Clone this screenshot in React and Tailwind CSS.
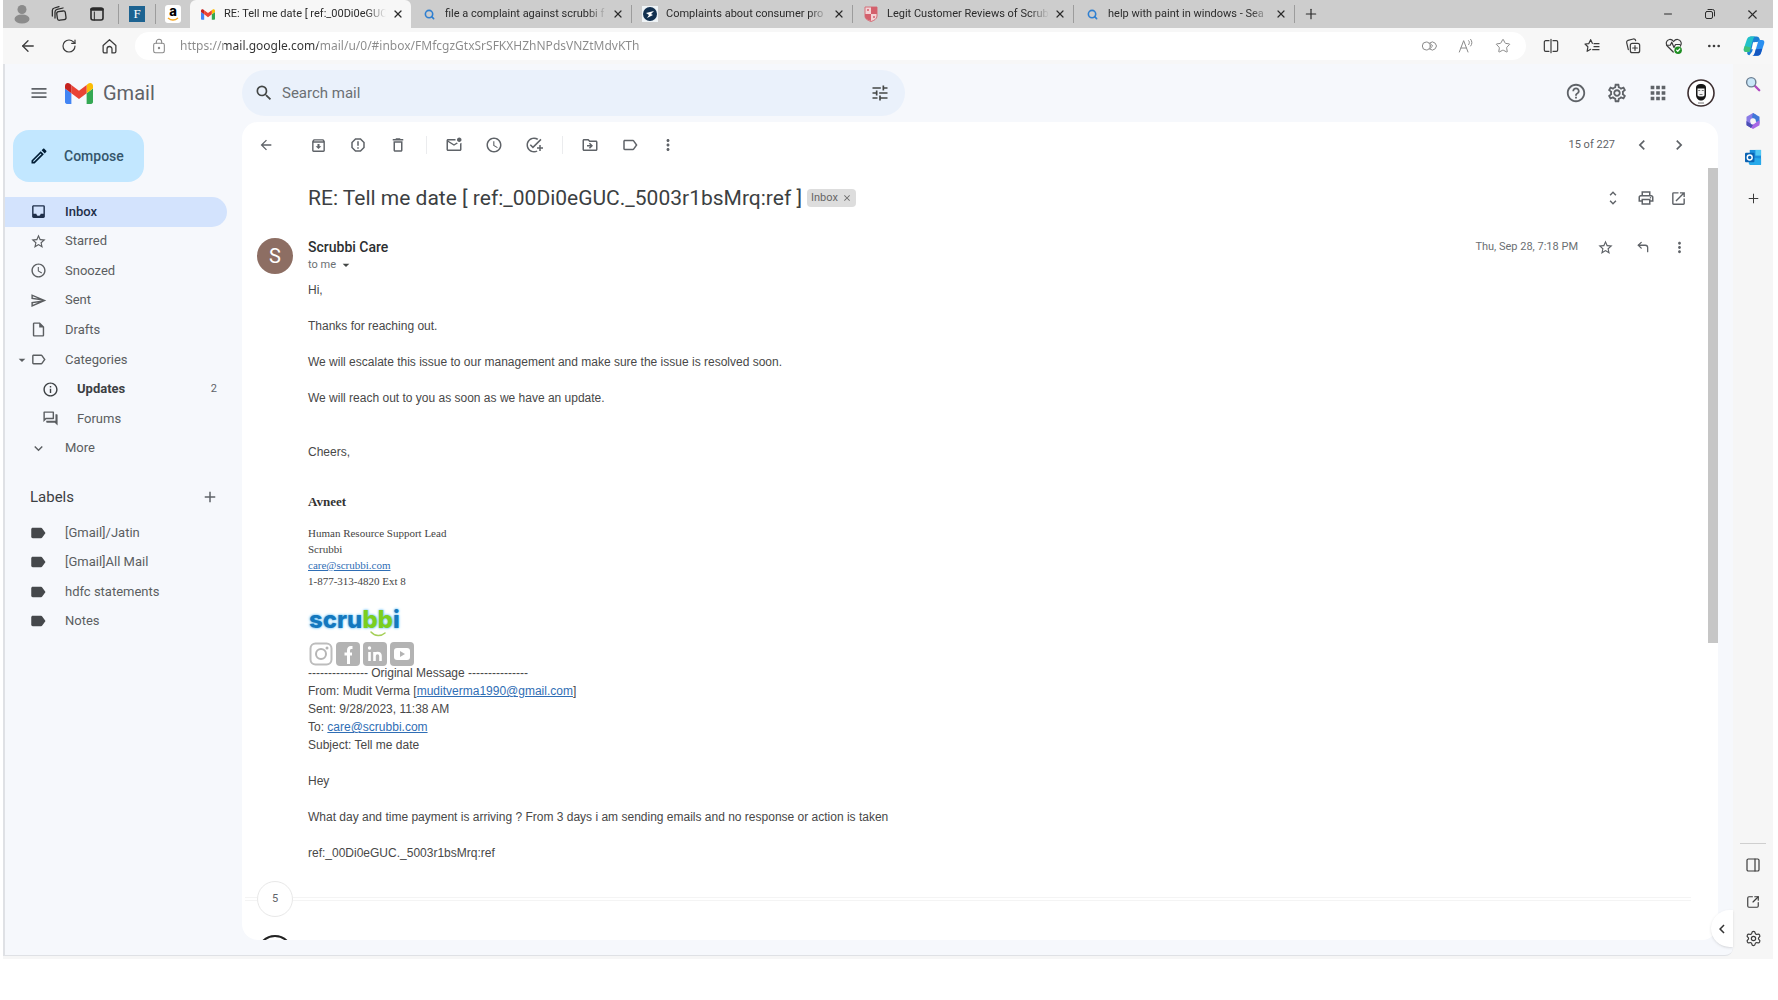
import React from "react";
import {
  MdOutlineArchive, MdReportGmailerrorred, MdOutlineDelete, MdOutlineMarkEmailUnread, MdAccessTime,
  MdOutlineAddTask, MdOutlineDriveFileMove, MdOutlineLabel, MdMoreVert, MdInbox, MdStarBorder,
  MdOutlineSend, MdOutlineInsertDriveFile, MdArrowDropDown, MdInfoOutline, MdOutlineForum,
  MdExpandMore, MdLabel, MdAdd, MdMenu, MdSearch, MdTune, MdHelpOutline, MdOutlineSettings, MdApps,
  MdUnfoldMore, MdOutlinePrint, MdOpenInNew, MdArrowBack, MdChevronLeft, MdChevronRight,
  MdOutlineCreate, MdClose,
} from "react-icons/md";
import {
  ArrowLeft, RotateCw, Star, Ellipsis, Plus, X, Minus, Search, Settings,
  PanelRight, SquareArrowOutUpRight, CornerUpLeft,
} from "lucide-react";

/* ---------- drawings ---------- */

function GmailLogo({ className }) {
  return (
    <svg viewBox="52 42 88 66" className={className} aria-hidden="true">
      <path fill="#4285f4" d="M58 108h14V74L52 59v43c0 3.320 2.690 6 6 6" />
      <path fill="#34a853" d="M120 108h14c3.320 0 6-2.690 6-6V59l-20 15" />
      <path fill="#fbbc04" d="M120 48v26l20-15v-8c0-7.420-8.470-11.650-14.400-7.200" />
      <path fill="#ea4335" d="M72 74V48l24 18 24-18v26L96 92" />
      <path fill="#c5221f" d="M52 51v8l20 15V48l-5.600-4.200c-5.940-4.450-14.400-.22-14.400 7.200" />
    </svg>
  );
}

function Stroke({ className, children, width = 1.5 }) {
  return (
    <svg viewBox="0 0 24 24" className={className} fill="none" stroke="currentColor" strokeWidth={width} strokeLinecap="round" strokeLinejoin="round" aria-hidden="true">
      {children}
    </svg>
  );
}

const Person = () => (
  <svg viewBox="0 0 18 20" className="h-5 w-[18px]" fill="#8b8b8b" aria-hidden="true">
    <circle cx="9" cy="5.500" r="4.500" />
    <ellipse cx="9" cy="15" rx="7.500" ry="4.500" />
  </svg>
);
const Workspaces = () => (
  <Stroke className="size-4" width={1.9}>
    <rect x="9" y="8" width="13" height="13" rx="3" transform="rotate(-8 15 14)" />
    <path d="M6 18V9a4 4 0 0 1 3-4l9-2" />
    <path d="M2 15V7a4 4 0 0 1 3-4l7-2" />
  </Stroke>
);
const TabActions = () => (
  <Stroke className="size-4" width={2.4}>
    <rect x="3" y="3" width="18" height="18" rx="3" />
    <path d="M4 5h16" strokeWidth="4" />
    <path d="M8 9v12" strokeWidth="1.500" />
  </Stroke>
);
const HomeIcon = () => (
  <Stroke className="size-[17px]" width={1.8}>
    <path d="M3 10.500 12 2.500l9 8V19a2 2 0 0 1-2 2h-3.500v-5.500a3.500 3.500 0 0 0-7 0V21H5a2 2 0 0 1-2-2z" />
  </Stroke>
);
const LockIcon = () => (
  <Stroke className="size-4 shrink-0" width={1.6}>
    <rect x="4" y="8" width="16" height="14" rx="2.500" />
    <path d="M8 8V6a4 4 0 0 1 8 0v2" />
    <circle cx="12" cy="15" r="1" fill="currentColor" />
  </Stroke>
);
const CompareIcon = () => (
  <Stroke className="size-4">
    <circle cx="8" cy="12" r="6" />
    <path d="M13 7.500a6 6 0 1 1 0 9M13 7.500l4.500 4.500-4.500 4.500" />
  </Stroke>
);
const ReadAloud = () => (
  <Stroke className="size-4">
    <path d="M2 21 8.500 4 15 21M4.500 15h8M16 4c1.500 1.500 1.500 4 0 6M19 2c2.500 3 2.500 7 0 10" />
  </Stroke>
);
const SplitScreen = () => (
  <Stroke className="size-4" width={1.8}>
    <path d="M9 4H4a2 2 0 0 0-2 2v12a2 2 0 0 0 2 2h5M15 4h5a2 2 0 0 1 2 2v12a2 2 0 0 1-2 2h-5M12 2v20" />
  </Stroke>
);
const Favorites = () => (
  <Stroke className="size-4" width={1.8}>
    <path d="M12.500 8 10 2.500 7.300 8.300 1.500 9l4.300 4.200L4.700 20l5.300-3M15 8.500h7.500M15 13h7.500M13 17.500h9.500" />
  </Stroke>
);
const Collections = () => (
  <Stroke className="size-4" width={1.8}>
    <rect x="8" y="8" width="14" height="14" rx="3" />
    <path d="M5 17.500 2.500 7A3 3 0 0 1 4.500 3.500l8-2A3 3 0 0 1 16 4M15 11.500v7M11.500 15h7" />
  </Stroke>
);
const Health = () => (
  <svg viewBox="0 0 24 24" className="size-[18px]" fill="none" stroke="currentColor" strokeWidth="1.600" strokeLinejoin="round" strokeLinecap="round" aria-hidden="true">
    <path d="M11 20 3 12c-2.500-3-1.500-8 3-8.700 2.500-.3 4 .7 5.500 2.700C13 4 15 3 17 3.300c4.500.7 6 5.700 3.500 8.700" />
    <path d="M2 11h5l2-4 3 7 2-4h6" />
    <circle cx="17.500" cy="17.500" r="5" fill="#1e8e22" stroke="none" />
    <path d="m15.500 17.500 1.500 1.500 2.700-3" stroke="#fff" />
  </svg>
);
const Copilot = () => (
  <svg viewBox="0 0 24 24" className="size-[22px]" aria-hidden="true">
    <path fill="#1b7fd4" d="M8 1.500h7c1.500 0 2.400.8 2.900 2.300L19 7l-6 1-3 10-3 4c-1.500 0-2-.5-2.500-2L8 1.500Z" />
    <path fill="#22c1c9" d="M8.500 1.500C6 1.500 5 2.500 4.200 5L1 14.500C.2 17 1 18.500 3.500 18.500H7L11 5c.5-2 1.200-3.500 3-3.500H8.500Z" />
    <path fill="#3fc27a" d="M2 12 1 15c-.5 2 .5 3.500 2.500 3.500H7l1.500-5L2 12Z" />
    <path fill="#2a8ff0" d="M15.500 22.500c2.500 0 3.500-1 4.300-3.500L23 9.500c.8-2.500 0-4-2.500-4H17L13 19c-.5 2-1.200 3.500-3 3.500h5.500Z" />
    <path fill="#1557c0" d="m21 15-1.200 4c-.8 2.500-1.800 3.500-4.300 3.500H10c1.500 0 2.500-1.500 3-3.500l1-3.500L21 15Z" />
    <path fill="#fff" d="M11 8h3.500L12.800 15.500H9.300z" />
  </svg>
);
const EdgeSearch = () => (
  <svg viewBox="0 0 18 18" className="size-4" fill="none" aria-hidden="true">
    <path d="m11 11 5 5" stroke="#b04ac0" strokeWidth="2.600" strokeLinecap="round" />
    <circle cx="7" cy="7" r="5.200" fill="#c9e6f8" stroke="#6c7f92" strokeWidth="1.600" />
  </svg>
);
const M365 = () => (
  <svg viewBox="0 0 18 18" className="size-[18px]" aria-hidden="true">
    <path d="M9 1 2.500 4.800v8L7 15.500V9l5.500-6z" fill="#8a7be6" />
    <path d="m9 1 6.500 3.800v7L11 9 8 5z" fill="#3f78d8" />
    <path d="M15.500 8v5.200L9 17l-6.500-4L9 12.500z" fill="#a868e6" />
    <path d="m2.500 9 4.500 3 2 1-2 3-4.500-2.700z" fill="#4b4fb4" />
    <circle cx="9" cy="9" r="2.800" fill="#f6f6f6" />
  </svg>
);
const Outlook = () => (
  <svg viewBox="0 0 18 18" className="size-[17px]" aria-hidden="true">
    <path d="M5 1h12v15H5z" fill="#1a8fdd" />
    <path d="M11 1h6v6h-6z" fill="#50c8f4" />
    <path d="m4 9 13 1v7H6c-1 0-2-1-2-2z" fill="#27a9ea" />
    <rect x="0" y="4" width="10" height="10" rx="1" fill="#0a64b4" />
    <circle cx="5" cy="9" r="2.600" fill="none" stroke="#fff" strokeWidth="1.500" />
  </svg>
);
const Face = () => (
  <svg viewBox="0 0 28 28" className="size-7" aria-hidden="true">
    <circle cx="14" cy="14" r="13" fill="#fff" stroke="#3d2f31" strokeWidth="1.600" />
    <path d="M9 9c0-3 2-4 5-4s5 1 5 4v7c0 3.500-2.500 5.500-5 5.500S9 19.500 9 16z" fill="#161616" />
    <path d="M10.500 9.500h7v6.500c0 1-1.500 1.500-3.500 1.500s-3.500-.5-3.500-1.500z" fill="#f4f4f4" />
    <path d="M11.200 11.500h2M14.800 11.500h2M12.500 15.500h3" stroke="#555" strokeWidth=".8" />
    <path d="M11 24h6" stroke="#777" strokeWidth="1" />
  </svg>
);
const Restore = () => (
  <Stroke className="size-3" width={2}>
    <rect x="3" y="7" width="14" height="14" rx="3" />
    <path d="M8 3h9a4 4 0 0 1 4 4v9" />
  </Stroke>
);
const BlueSearch = () => <Search className="size-[11px] text-[#2f7fd0]" strokeWidth={3.5} />;
const CfpbIcon = () => (
  <svg viewBox="0 0 16 16" className="size-4" aria-hidden="true">
    <rect width="16" height="16" fill="#eef3f6" />
    <circle cx="8" cy="8" r="7" fill="#12304f" />
    <path d="m4 7 8-2-3 3 2 1-6 3 2-3z" fill="#fff" />
  </svg>
);
const ShieldIcon = () => (
  <svg viewBox="0 0 14 16" className="h-4 w-3.5" aria-hidden="true">
    <path d="M1 1h12v9c0 3-3 4.500-6 5.500C4 14.500 1 13 1 10z" fill="#f3d3d6" stroke="#d4707a" />
    <path d="M7 1h6v7H7zM1 8h6v7C4 14 1 13 1 10z" fill="#d4606c" />
    <path d="M3 4h2M9 11h2" stroke="#d4606c" strokeWidth="1.500" />
  </svg>
);

/* ---------- browser chrome ---------- */

const tabs = [
  { title: "RE: Tell me date [ ref:_00Di0eGUC", icon: <GmailLogo className="h-[11px] w-3.5" />, active: true },
  { title: "file a complaint against scrubbi f", icon: <BlueSearch /> },
  { title: "Complaints about consumer pro", icon: <CfpbIcon /> },
  { title: "Legit Customer Reviews of Scrub", icon: <ShieldIcon /> },
  { title: "help with paint in windows - Sea", icon: <BlueSearch /> },
];

function IconButton({ label, className = "", children }) {
  return (
    <button type="button" aria-label={label} className={`flex shrink-0 items-center justify-center ${className}`}>
      {children}
    </button>
  );
}

function TabStrip() {
  return (
    <header className="flex h-[28px] shrink-0 items-center bg-[#cdcdcd] text-[#2b2b2b]">
      <IconButton label="Profile" className="w-[37px]"><Person /></IconButton>
      <IconButton label="Workspaces" className="w-[38px]"><Workspaces /></IconButton>
      <IconButton label="Tab actions" className="w-[38px]"><TabActions /></IconButton>
      <span className="ml-[2px] h-5 w-px bg-[#9c9c9c]" />
      <IconButton label="Pinned tab F" className="w-9">
        <span className="flex h-4 w-4 items-center justify-center bg-[#1d6391] font-['Liberation_Serif',serif] text-[13px] leading-4 text-white">F</span>
      </IconButton>
      <span className="h-5 w-px bg-[#9c9c9c]" />
      <IconButton label="Pinned tab Amazon" className="w-[34px]">
        <span className="flex h-[18px] w-4 flex-col items-center rounded-[3px] bg-white font-['Inter',sans-serif] text-[13px] leading-3 font-extrabold text-black">
          a
          <svg viewBox="0 0 12 4" className="h-1 w-3" aria-hidden="true"><path d="M1 1c3 2.500 7 2.500 10 0" fill="none" stroke="#f5a623" strokeWidth="1.500" /></svg>
        </span>
      </IconButton>
      {tabs.map((t, i) => (
        <div
          key={t.title}
          className={
            t.active
              ? "flex h-full w-[221px] min-w-0 items-center rounded-t-md bg-[#f7f7f7] pr-[5px] pl-[10px]"
              : "flex h-full w-[221px] min-w-0 items-center pl-[10px]"
          }
        >
          <span className="flex w-4 shrink-0 justify-center">{t.icon}</span>
          <span className="ml-2 w-[162px] shrink-0 overflow-hidden font-['Roboto',sans-serif] text-[11px] leading-4 whitespace-nowrap [mask-image:linear-gradient(to_right,#000_88%,transparent)]">{t.title}</span>
          <IconButton label={`Close tab ${i + 1}`} className="ml-auto size-4"><X className="size-3" strokeWidth={2.4} /></IconButton>
          {!t.active && <span className="ml-[5px] h-[18px] w-px shrink-0 bg-[#9c9c9c]" />}
        </div>
      ))}
      <IconButton label="New tab" className="w-8"><Plus className="size-4" strokeWidth={1.8} /></IconButton>
      <div className="ml-auto flex">
        <IconButton label="Minimize" className="w-[42px]"><Minus className="size-3" strokeWidth={2} /></IconButton>
        <IconButton label="Restore" className="w-[42px]"><Restore /></IconButton>
        <IconButton label="Close window" className="w-[42px]"><X className="size-[15px]" strokeWidth={1.7} /></IconButton>
      </div>
    </header>
  );
}

function AddressBar() {
  return (
    <div className="flex h-[36px] shrink-0 items-center bg-[#f7f7f7] pl-1 text-[#3c3c3c]">
      <IconButton label="Back" className="w-[41px]"><ArrowLeft className="size-[18px]" strokeWidth={1.7} /></IconButton>
      <IconButton label="Refresh" className="w-[41px]"><RotateCw className="size-4" strokeWidth={1.8} /></IconButton>
      <IconButton label="Home" className="w-[40px]"><HomeIcon /></IconButton>
      <label className="ml-[6px] flex h-7 min-w-0 flex-1 items-center rounded-full bg-white pr-[5px] pl-4 text-[#8a8a8a]">
        <LockIcon />
        <input
          aria-label="Address"
          defaultValue="https://mail.google.com/mail/u/0/#inbox/FMfcgzGtxSrSFKXHZhNPdsVNZtMdvKTh"
          className="ml-[13px] min-w-0 flex-1 bg-[linear-gradient(to_right,#8a8a8a_44px,#333_44px,#333_138px,#8a8a8a_138px)] bg-clip-text font-['Noto_Sans',sans-serif] text-[12px] leading-5 text-transparent outline-none"
        />
        <IconButton label="Compare" className="w-[37px]"><CompareIcon /></IconButton>
        <IconButton label="Read aloud" className="w-[37px]"><ReadAloud /></IconButton>
        <IconButton label="Favorite this page" className="w-[37px]"><Star className="size-4" strokeWidth={1.5} /></IconButton>
      </label>
      <div className="flex pl-1">
        <IconButton label="Split screen" className="w-[41px]"><SplitScreen /></IconButton>
        <IconButton label="Favorites" className="w-[41px]"><Favorites /></IconButton>
        <IconButton label="Collections" className="w-[41px]"><Collections /></IconButton>
        <IconButton label="Browser essentials" className="w-[41px]"><Health /></IconButton>
        <IconButton label="More" className="w-[40px]"><Ellipsis className="size-4" /></IconButton>
        <IconButton label="Copilot" className="w-[39px]"><Copilot /></IconButton>
      </div>
    </div>
  );
}

function EdgeSidebar() {
  return (
    <aside className="flex w-10 shrink-0 flex-col items-center bg-[#f6f6f6] pt-px pb-[2px] text-[#3c3c3c]">
      <IconButton label="Search" className="h-[37px] w-full"><EdgeSearch /></IconButton>
      <IconButton label="Microsoft 365" className="h-[37px] w-full"><M365 /></IconButton>
      <IconButton label="Outlook" className="h-[37px] w-full"><Outlook /></IconButton>
      <IconButton label="Customize" className="mt-1 h-[37px] w-full"><Plus className="size-[15px]" strokeWidth={1.6} /></IconButton>
      <span className="mt-auto mb-[2px] h-px w-[26px] bg-[#cfcfcf]" />
      <IconButton label="Toggle sidebar" className="h-[37px] w-full"><PanelRight className="size-4" strokeWidth={1.8} /></IconButton>
      <IconButton label="Open outside" className="h-[37px] w-full"><SquareArrowOutUpRight className="size-3.5" strokeWidth={2} /></IconButton>
      <IconButton label="Sidebar settings" className="h-[37px] w-full"><Settings className="size-[17px]" strokeWidth={1.7} /></IconButton>
    </aside>
  );
}

/* ---------- Gmail ---------- */

function GmailHeader() {
  return (
    <div className="flex h-[58px] shrink-0 items-center pr-[13px]">
      <div className="flex w-[237px] shrink-0 items-center pl-6 text-[#5f6368]">
        <IconButton label="Main menu"><MdMenu className="size-5" /></IconButton>
        <GmailLogo className="ml-4 h-[21px] w-7" />
        <span className="ml-[10px] text-[20px] leading-6">Gmail</span>
      </div>
      <label className="flex h-[46px] w-[663px] items-center rounded-full bg-[#eaf1fb] pr-[15px] pl-3 text-[#444746]">
        <MdSearch className="size-5" />
        <input aria-label="Search mail" placeholder="Search mail" className="ml-2 min-w-0 flex-1 bg-transparent text-[15px] leading-5 outline-none placeholder:text-[#6b6f73]" />
        <IconButton label="Search options"><MdTune className="size-5" /></IconButton>
      </label>
      <div className="ml-auto flex items-center text-[#5f6368]">
        <IconButton label="Support" className="w-[41px]"><MdHelpOutline className="size-[22px]" /></IconButton>
        <IconButton label="Settings" className="w-[41px]"><MdOutlineSettings className="size-[22px]" /></IconButton>
        <IconButton label="Google apps" className="w-[41px]"><MdApps className="size-[22px]" /></IconButton>
        <IconButton label="Account" className="ml-1 w-[38px]"><Face /></IconButton>
      </div>
    </div>
  );
}

const folders = [
  { name: "Inbox", icon: MdInbox, active: true },
  { name: "Starred", icon: MdStarBorder },
  { name: "Snoozed", icon: MdAccessTime },
  { name: "Sent", icon: MdOutlineSend },
  { name: "Drafts", icon: MdOutlineInsertDriveFile },
  { name: "Categories", icon: MdOutlineLabel, caret: true },
  { name: "Updates", icon: MdInfoOutline, sub: true, count: 2 },
  { name: "Forums", icon: MdOutlineForum, sub: true },
  { name: "More", icon: MdExpandMore },
];

const labels = ["[Gmail]/Jatin", "[Gmail]All Mail", "hdfc statements", "Notes"];

function NavItem({ item }) {
  const Icon = item.icon;
  return (
    <li className={item.active ? "flex rounded-r-full bg-[#d3e3fd] font-medium text-[#1f2f4a]" : item.count ? "flex font-bold text-[#3c4043]" : "flex text-[#5b5e61]"}>
      <a href="#" className={item.sub ? "flex flex-1 items-center pr-[10px] pl-[37px]" : "flex flex-1 items-center pr-[10px] pl-[9px]"}>
        {!item.sub && <span className="flex w-4 justify-center">{item.caret && <MdArrowDropDown className="size-4 shrink-0" />}</span>}
        <Icon className="size-[17px] shrink-0" />
        <span className="ml-[18px] text-[13px] leading-5">{item.name}</span>
        {item.count && <span className="ml-auto text-[11px] leading-5 font-normal text-[#5f6368]">{item.count}</span>}
      </a>
    </li>
  );
}

function Sidebar() {
  return (
    <nav className="w-[237px] shrink-0 pt-2 pr-[15px]">
      <button type="button" className="ml-2 flex h-[52px] w-[131px] items-center rounded-2xl bg-[#c2e7ff] pl-4 text-[14px] leading-5 font-medium text-[#35566b]">
        <MdOutlineCreate className="size-5 text-[#001d35]" />
        <span className="ml-[15px]">Compose</span>
      </button>
      <ul className="mt-[15px] grid h-[266px] auto-rows-fr">
        {folders.map((f) => <NavItem key={f.name} item={f} />)}
      </ul>
      <div className="mt-[24px] flex h-[20px] items-center justify-between pr-[8px] pl-[25px]">
        <h2 className="text-[15px] leading-5 text-[#3c4043]">Labels</h2>
        <IconButton label="Create new label"><MdAdd className="size-[18px] text-[#5f6368]" /></IconButton>
      </div>
      <ul className="mt-[11px] grid h-[118px] auto-rows-fr">
        {labels.map((l) => (
          <li key={l} className="flex text-[#5b5e61]">
            <a href="#" className="flex flex-1 items-center pl-6">
              <MdLabel className="size-[18px] text-[#45484b]" />
              <span className="ml-[18px] text-[13px] leading-5">{l}</span>
            </a>
          </li>
        ))}
      </ul>
    </nav>
  );
}

function MailToolbar() {
  return (
    <div className="flex h-[46px] shrink-0 items-center pr-[21px] pl-[3px] text-[#5f6368]">
      <IconButton label="Back to Inbox" className="w-[41px]"><MdArrowBack className="size-4" /></IconButton>
      <IconButton label="Archive" className="ml-[12px] w-10"><MdOutlineArchive className="size-[17px]" /></IconButton>
      <IconButton label="Report spam" className="w-10"><MdReportGmailerrorred className="size-[18px]" /></IconButton>
      <IconButton label="Delete" className="w-10"><MdOutlineDelete className="size-[18px]" /></IconButton>
      <span className="ml-2 h-[18px] w-px bg-[#ebecee]" />
      <IconButton label="Mark as unread" className="ml-[7px] w-10"><MdOutlineMarkEmailUnread className="size-[18px]" /></IconButton>
      <IconButton label="Snooze" className="w-10"><MdAccessTime className="size-[18px]" /></IconButton>
      <IconButton label="Add to tasks" className="w-10"><MdOutlineAddTask className="size-[18px]" /></IconButton>
      <span className="ml-2 h-[18px] w-px bg-[#ebecee]" />
      <IconButton label="Move to" className="ml-[7px] w-10"><MdOutlineDriveFileMove className="size-[18px]" /></IconButton>
      <IconButton label="Labels" className="w-10"><MdOutlineLabel className="size-[18px]" /></IconButton>
      <IconButton label="More" className="w-9"><MdMoreVert className="size-[18px]" /></IconButton>
      <span className="ml-auto mr-2 text-[11px] leading-4">15 of 227</span>
      <IconButton label="Newer" className="w-[37px]"><MdChevronLeft className="size-5" /></IconButton>
      <IconButton label="Older" className="w-[37px]"><MdChevronRight className="size-5" /></IconButton>
    </div>
  );
}

function Link({ children }) {
  return <a href="#" className="text-[#2f6eb5] underline">{children}</a>;
}

function Social({ label, children }) {
  return (
    <a href="#" aria-label={label}>
      <svg viewBox="0 0 24 24" className="size-6" aria-hidden="true">{children}</svg>
    </a>
  );
}

function Signature() {
  return (
    <div className="font-['Liberation_Serif',serif] text-[11px] leading-4 text-[#444]">
      <p className="mt-[32px] text-[13px] leading-[18px] font-bold text-[#333]">Avneet</p>
      <p className="mt-[14px]">Human Resource Support Lead</p>
      <p>Scrubbi</p>
      <p><Link>care@scrubbi.com</Link></p>
      <p>1-877-313-4820 Ext 8</p>
      <div className="relative mt-[17px] w-[94px] pl-px font-['Inter',sans-serif] text-[24px] leading-7 font-extrabold text-[#1478be] [text-shadow:0_0_3px_#7cc8f5,0_0_2px_#7cc8f5]">
        scru<span className="text-[#7bcf1f]">bb</span>i
        <svg viewBox="0 0 16 6" className="absolute top-[25px] left-[62px] h-[6px] w-4" aria-hidden="true">
          <path d="M1 1c4 4.500 10 4.500 14 1" fill="none" stroke="#a5cf57" strokeWidth="1.500" strokeLinecap="round" />
        </svg>
      </div>
      <div className="mt-2 flex gap-[3px] pl-px">
        <Social label="Instagram">
          <rect x="1.500" y="1.500" width="21" height="21" rx="5" fill="#fff" stroke="#bdbdbd" strokeWidth="2" />
          <circle cx="12" cy="12" r="5" fill="none" stroke="#b5b5b5" strokeWidth="2" />
          <circle cx="18" cy="6" r="1.500" fill="#b5b5b5" />
        </Social>
        <Social label="Facebook">
          <rect width="24" height="24" rx="4" fill="#b3b3b3" />
          <path d="M16.500 5.500H15c-2 0-2.500 1-2.500 3V22M8.500 12h7.500" fill="none" stroke="#fff" strokeWidth="3" />
        </Social>
        <Social label="LinkedIn">
          <rect width="24" height="24" rx="4" fill="#b3b3b3" />
          <path d="M6.500 10v9M11.500 10v9M11.500 19v-5c0-4 6-4 6 0v5" fill="none" stroke="#fff" strokeWidth="2.600" />
          <circle cx="6.500" cy="6" r="1.700" fill="#fff" />
        </Social>
        <Social label="YouTube">
          <rect width="24" height="24" rx="4" fill="#b3b3b3" />
          <rect x="4" y="6" width="16" height="12" rx="3" fill="#fff" />
          <path d="m10 9 5 3-5 3z" fill="#b3b3b3" />
        </Social>
      </div>
    </div>
  );
}

function Message() {
  return (
    <article className="flex pr-5 pl-[15px]">
      <div className="flex size-9 shrink-0 items-center justify-center rounded-full bg-[#8d6e63] text-[20px] leading-6 text-white">S</div>
      <div className="ml-[15px] min-w-0 flex-1">
        <div className="flex h-[18px] items-center">
          <h3 className="text-[14px] leading-[18px] font-medium text-[#2c2f31]">Scrubbi Care</h3>
          <span className="ml-auto mr-[9px] text-[11px] leading-4 text-[#6b6f73]">Thu, Sep 28, 7:18 PM</span>
          <div className="flex text-[#5f6368]">
            <IconButton label="Star" className="w-[37px]"><MdStarBorder className="size-[17px]" /></IconButton>
            <IconButton label="Reply" className="w-[37px]"><CornerUpLeft className="size-3.5" strokeWidth={2.2} /></IconButton>
            <IconButton label="More" className="w-[37px]"><MdMoreVert className="size-[17px]" /></IconButton>
          </div>
        </div>
        <button type="button" className="flex h-[18px] items-center gap-[2px] text-[11px] leading-4 text-[#6b6f73]">
          to me <MdArrowDropDown className="size-4 text-[#444746]" />
        </button>
        <div className="mt-[7px] font-['Liberation_Sans',sans-serif] text-[12px] leading-[18px] text-[#484848]">
          <p>Hi,</p>
          <p className="mt-[18px]">Thanks for reaching out.</p>
          <p className="mt-[18px]">We will escalate this issue to our management and make sure the issue is resolved soon.</p>
          <p className="mt-[18px]">We will reach out to you as soon as we have an update.</p>
          <p className="mt-[36px]">Cheers,</p>
          <Signature />
          <p className="-mt-[2px]">--------------- Original Message ---------------</p>
          <p>From: Mudit Verma [<Link>muditverma1990@gmail.com</Link>]</p>
          <p>Sent: 9/28/2023, 11:38 AM</p>
          <p>To: <Link>care@scrubbi.com</Link></p>
          <p>Subject: Tell me date</p>
          <p className="mt-[18px]">Hey</p>
          <p className="mt-[18px]">What day and time payment is arriving ? From 3 days i am sending emails and no response or action is taken</p>
          <p className="mt-[18px]">ref:_00Di0eGUC._5003r1bsMrq:ref</p>
        </div>
      </div>
    </article>
  );
}

function MailView() {
  return (
    <main className="flex min-w-0 flex-1 flex-col overflow-hidden rounded-2xl bg-white">
      <MailToolbar />
      <div className="flex min-h-0 flex-1">
        <div className="min-w-0 flex-1 overflow-hidden">
          <div className="flex h-[60px] items-center pr-[13px] pl-[66px] text-[#5f6368]">
            <h1 className="text-[21px] leading-7 text-[#3c3f42]">RE: Tell me date [ ref:_00Di0eGUC._5003r1bsMrq:ref ]</h1>
            <span className="ml-[5px] flex h-[18px] items-center rounded bg-[#dddddd] px-1 text-[11px] leading-4 text-[#666]">
              Inbox <IconButton label="Remove label Inbox" className="ml-1"><MdClose className="size-[10px]" /></IconButton>
            </span>
            <div className="ml-auto flex">
              <IconButton label="Collapse all" className="w-[33px]"><MdUnfoldMore className="size-[18px]" /></IconButton>
              <IconButton label="Print all" className="w-[33px]"><MdOutlinePrint className="size-[18px]" /></IconButton>
              <IconButton label="Open in new window" className="w-[33px]"><MdOpenInNew className="size-[17px]" /></IconButton>
            </div>
          </div>
          <div className="-mr-[10px] pt-[10px]"><Message /></div>
          <div className="mt-[19px] flex items-center pr-[17px] pl-[3px]">
            <span className="h-1 w-3 border-y border-[#f4f4f4]" />
            <button type="button" className="flex size-9 items-center justify-center rounded-full border border-[#e8e8e8] text-[11px] leading-4 text-[#5f6368]">5</button>
            <span className="h-1 flex-1 border-y border-[#f4f4f4]" />
          </div>
          <div className="mt-[18px] flex pr-[10px] pl-[15px]">
            <span className="size-9 shrink-0 rounded-full border-2 border-[#222]" />
            <span className="mt-[3px] ml-[15px] text-[14px] leading-[18px] font-medium text-[#2c2f31]">Mudit Verma</span>
          </div>
        </div>
        <div className="w-[10px] shrink-0">
          <div className="h-[61.5%] bg-[#c6c6c6]" />
        </div>
      </div>
    </main>
  );
}

export default function App() {
  return (
    <div className="flex h-screen flex-col bg-white pr-[5px] pb-[41px] pl-[3px] font-['Roboto',sans-serif]">
      <TabStrip />
      <AddressBar />
      <div className="flex min-h-0 flex-1 bg-[#f6f6f6]">
        <div className="relative mb-[3px] flex min-w-0 flex-1 flex-col rounded-br-lg border-b border-l-2 border-[#dfe1e5] bg-[#f6f8fc]">
          <GmailHeader />
          <div className="flex min-h-0 flex-1 pr-[15px] pb-[15px]">
            <Sidebar />
            <MailView />
          </div>
          <button type="button" aria-label="Show side panel" className="absolute right-0 bottom-[8px] flex h-[37px] w-[22px] items-center justify-center rounded-l-full bg-white text-[#333] shadow">
            <MdChevronLeft className="size-[18px]" />
          </button>
        </div>
        <EdgeSidebar />
      </div>
    </div>
  );
}
